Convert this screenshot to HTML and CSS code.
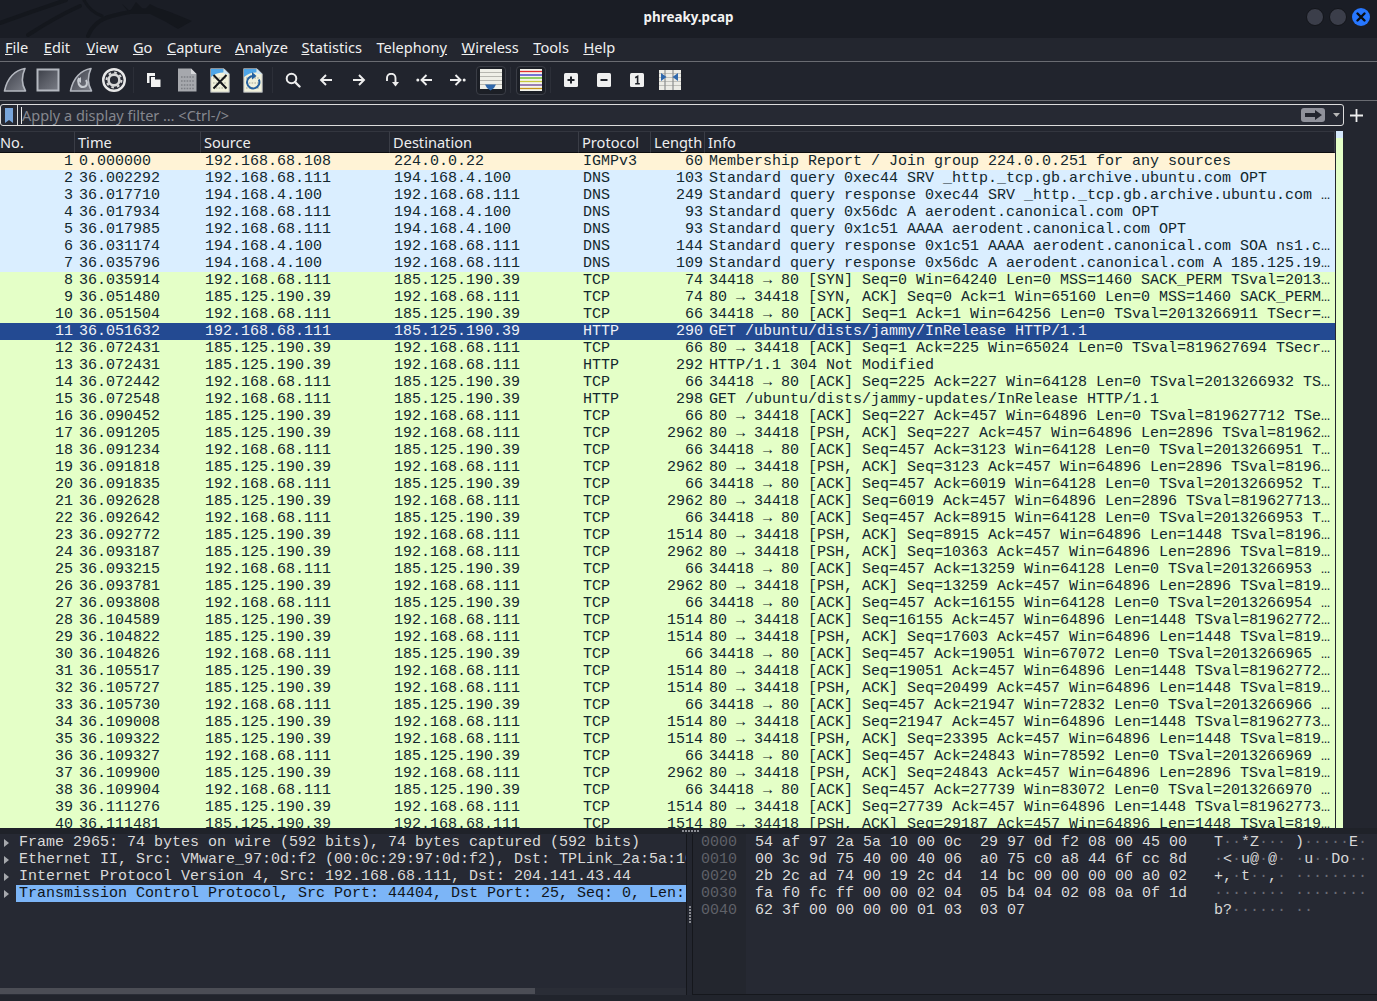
FILE: index.html
```html
<!DOCTYPE html>
<html lang="en">
<head>
<meta charset="utf-8">
<title>phreaky.pcap</title>
<link rel="stylesheet" href="styles.css">
</head>
<body>
<div class="app">
<header class="titlebar">
  <svg class="dragon" width="240" height="38" viewBox="0 0 240 38">
    <g fill="none" stroke="#14171d" stroke-linecap="round">
      <path d="M0 23 C22 15 42 8 66 0" stroke-width="4"/>
      <path d="M28 35 C45 24 62 14 80 6" stroke-width="4"/>
      <path d="M84 0 C88 8 94 13 102 16" stroke-width="3"/>
      <path d="M88 36 C92 26 100 19 112 16 C130 11 146 9 160 11 C168 13 172 16 178 20" stroke-width="4"/>
    </g>
    <path fill="#14171d" d="M122 4 L130 11 L136 2 L144 10 L150 4 L158 8 L170 12 L192 21 L178 29 L166 22 L150 14 L130 14 Z"/>
  </svg>
  <span class="title">phreaky.pcap</span>
  <div class="winbtns">
    <span class="winbtn"></span>
    <span class="winbtn"></span>
    <svg class="winclose" width="18" height="18" viewBox="0 0 18 18"><circle cx="9" cy="9" r="9" fill="#2777ff"/><path d="M5.5 5.5 L12.5 12.5 M12.5 5.5 L5.5 12.5" stroke="#0b0d12" stroke-width="2.4" stroke-linecap="round"/></svg>
  </div>
</header>
<nav class="menubar">
  <span><u>F</u>ile</span><span><u>E</u>dit</span><span><u>V</u>iew</span><span><u>G</u>o</span><span><u>C</u>apture</span><span><u>A</u>nalyze</span><span><u>S</u>tatistics</span><span>Telephon<u>y</u></span><span><u>W</u>ireless</span><span><u>T</u>ools</span><span><u>H</u>elp</span>
</nav>
<div class="toolbar">
  <span class="btn first"><svg width="24" height="26" viewBox="0 0 24 26"><defs><linearGradient id="fg" x1="0" y1="0" x2="1" y2="1"><stop offset="0" stop-color="#3a3d47"/><stop offset="1" stop-color="#7c7f88"/></linearGradient></defs><path d="M22 1.5 C12 3 4 11 1.5 24 L22.5 24 C18.5 17 18.5 9 22 1.5 Z" fill="url(#fg)" stroke="#b4b8c0" stroke-width="1.6" stroke-linejoin="round"/></svg></span>
  <span class="btn"><svg width="24" height="24" viewBox="0 0 24 24"><defs><linearGradient id="sg" x1="0" y1="0" x2="1" y2="1"><stop offset="0" stop-color="#3d4049"/><stop offset="1" stop-color="#7a7d86"/></linearGradient></defs><rect x="1.5" y="1.5" width="21" height="21" fill="url(#sg)" stroke="#b4b8c0" stroke-width="2"/></svg></span>
  <span class="btn"><svg width="24" height="26" viewBox="0 0 24 26"><path d="M22 1.5 C12 3 4 11 1.5 24 L22.5 24 C18.5 17 18.5 9 22 1.5 Z" fill="url(#fg)" stroke="#b4b8c0" stroke-width="1.6" stroke-linejoin="round"/><path d="M10 11 C8 15 10 20 14 20 C18 20 19 16 17 13" fill="none" stroke="#c8ccd2" stroke-width="2"/><path d="M12 10 L12 16 L8 13 Z" fill="#c8ccd2"/></svg></span>
  <span class="btn"><svg width="26" height="26" viewBox="0 0 26 26"><circle cx="13" cy="13" r="10.8" fill="#2a2d36" stroke="#e8e8e8" stroke-width="2.4"/><circle cx="13" cy="13" r="5.4" fill="none" stroke="#d8d8d8" stroke-width="2.6"/><circle cx="13" cy="13" r="7.4" fill="none" stroke="#d8d8d8" stroke-width="2" stroke-dasharray="2.6 3.2"/></svg></span>
  <span class="sep"></span>
  <span class="btn"><svg width="15" height="16" viewBox="0 0 15 16"><path d="M1 1 H9 V4 H3.5 V11 H1 Z" fill="#f2f2f2"/><path d="M5 5 H9 L9 7.5 H14.5 V15 H5 Z" fill="#f2f2f2"/></svg></span>
  <span class="btn"><svg width="20" height="24" viewBox="0 0 20 24"><path d="M1 0.5 H14 L19.5 6 V23.5 H1 Z" fill="#a6a8ad"/><path d="M14 0.5 V6 H19.5 Z" fill="#d6d7da"/><g stroke="#7d7f85" stroke-width="1.6" stroke-dasharray="1.6 1.2"><path d="M4 9 H17"/><path d="M4 13 H17"/><path d="M4 17 H17"/><path d="M4 20.5 H17"/></g></svg></span>
  <span class="btn"><svg width="20" height="25" viewBox="0 0 20 25"><path d="M0.7 0.7 H14 L19.3 6 V24.3 H0.7 Z" fill="#f1f1dc" stroke="#9da1a6"/><path d="M1 1 H13.5 V4.5 C9 4.5 5 5.5 1 9 Z" fill="#4fa6e8"/><path d="M14 1 V6 H19 Z" fill="#cfe6f5"/><g stroke="#bdbfae" stroke-width="1.4" stroke-dasharray="1.6 1.2"><path d="M3 10 H17"/><path d="M3 15 H17"/><path d="M3 20 H17"/></g><path d="M3.5 7 L16.5 20.5 M16.5 7 L3.5 20.5" stroke="#15171c" stroke-width="2"/></svg></span>
  <span class="btn"><svg width="20" height="25" viewBox="0 0 20 25"><path d="M0.7 0.7 H14 L19.3 6 V24.3 H0.7 Z" fill="#f1f1dc" stroke="#9da1a6"/><path d="M1 1 H13.5 V4.5 C9 4.5 5 5.5 1 9 Z" fill="#4fa6e8"/><path d="M14 1 V6 H19 Z" fill="#cfe6f5"/><g stroke="#bdbfae" stroke-width="1.4" stroke-dasharray="1.6 1.2"><path d="M3 10 H17"/><path d="M3 15 H17"/><path d="M3 20 H17"/></g><path d="M10.5 8 A6.2 6.2 0 1 0 15.8 11.5" fill="none" stroke="#24609f" stroke-width="2"/><path d="M9 4 L13.5 8 L9 11.5 Z" fill="#24609f"/></svg></span>
  <span class="sep"></span>
  <span class="btn"><svg width="16" height="16" viewBox="0 0 16 16"><circle cx="6.5" cy="6.5" r="4.8" fill="none" stroke="#eee" stroke-width="2"/><path d="M10 10 L14.5 14.5" stroke="#eee" stroke-width="2.4" stroke-linecap="round"/></svg></span>
  <span class="btn"><svg width="14" height="14" viewBox="0 0 14 14"><path d="M13 7 H2 M7 2 L2 7 L7 12" fill="none" stroke="#eee" stroke-width="1.9"/></svg></span>
  <span class="btn"><svg width="14" height="14" viewBox="0 0 14 14"><path d="M1 7 H12 M7 2 L12 7 L7 12" fill="none" stroke="#eee" stroke-width="1.9"/></svg></span>
  <span class="btn"><svg width="14" height="14" viewBox="0 0 14 14"><path d="M2 8 V5 A4 4 0 0 1 10.5 5 V9" fill="none" stroke="#eee" stroke-width="1.9"/><path d="M7 9 H14 L10.5 13.5 Z" fill="#eee"/></svg></span>
  <span class="btn"><svg width="17" height="14" viewBox="0 0 17 14"><circle cx="1.8" cy="7" r="1.5" fill="#eee"/><path d="M16 7 H6 M10.5 2 L5.5 7 L10.5 12" fill="none" stroke="#eee" stroke-width="1.9"/></svg></span>
  <span class="btn"><svg width="17" height="14" viewBox="0 0 17 14"><circle cx="15.2" cy="7" r="1.5" fill="#eee"/><path d="M1 7 H11 M6.5 2 L11.5 7 L6.5 12" fill="none" stroke="#eee" stroke-width="1.9"/></svg></span>
  <span class="btn"><span class="toggle"><svg width="22" height="22" viewBox="0 0 22 22"><rect width="22" height="20" fill="#efefe8"/><path d="M0 3.5 H22 M0 7.5 H22 M0 11.5 H22 M0 15.5 H22" stroke="#b6b6b0" stroke-width="1"/><path d="M10.5 21.5 L7 19 L5 15.5 H16 L14 19 Z" fill="#2f68ac"/></svg></span></span>
  <span class="sep"></span>
  <span class="btn"><span class="toggle"><svg width="22" height="22" viewBox="0 0 22 22"><rect width="22" height="22" fill="#f4f4ee"/><path d="M0 2.5 H22" stroke="#e03030" stroke-width="1.3"/><path d="M0 6 H22" stroke="#3030c8" stroke-width="1.3"/><path d="M0 9 H22" stroke="#5cb818" stroke-width="1.3"/><path d="M0 12.5 H22" stroke="#c8c83c" stroke-width="1.3"/><path d="M0 16 H22" stroke="#6a4090" stroke-width="1.3"/><path d="M0 19.5 H22" stroke="#c49418" stroke-width="1.3"/></svg></span></span>
  <span class="sep"></span>
  <span class="btn"><svg width="14" height="14" viewBox="0 0 14 14"><rect width="14" height="14" rx="1.5" fill="#f0f0f0"/><path d="M7 3.5 V10.5 M3.5 7 H10.5" stroke="#1f2229" stroke-width="2"/></svg></span>
  <span class="btn"><svg width="14" height="14" viewBox="0 0 14 14"><rect width="14" height="14" rx="1.5" fill="#f0f0f0"/><path d="M3.5 7 H10.5" stroke="#1f2229" stroke-width="2"/></svg></span>
  <span class="btn"><svg width="14" height="14" viewBox="0 0 14 14"><rect width="14" height="14" rx="1.5" fill="#f0f0f0"/><path d="M5.2 4.8 L7.6 3.4 V10.8 M5.2 10.8 H9.8" fill="none" stroke="#1f2229" stroke-width="1.6"/></svg></span>
  <span class="btn"><svg width="22" height="20" viewBox="0 0 22 20"><rect width="22" height="20" fill="#ecece6"/><path d="M0 3.5 H22 M0 7.5 H22 M0 11.5 H22 M0 15.5 H22" stroke="#c0c0ba"/><path d="M6 0 V20 M14 0 V20" stroke="#8d8f90" stroke-width="1.2"/><path d="M2 3 V11 L7.5 7 Z M19 3 V11 L13.5 7 Z" fill="#2f68ac"/></svg></span>
</div>
<div class="filterrow">
  <div class="filterbox">
    <svg class="bookmark" width="8" height="15" viewBox="0 0 8 15"><path d="M0 0 H8 V15 L4 12 L0 15 Z" fill="#78a6dc"/></svg>
    <span class="fdiv"></span>
    <span class="caret"></span>
    <span class="placeholder">Apply a display filter … &lt;Ctrl-/&gt;</span>
    <span class="applybtn"><svg width="17" height="10" viewBox="0 0 17 10"><path d="M0 3 H10 V0 L17 5 L10 10 V7 H0 Z" fill="#22252e"/></svg></span>
    <svg class="dropdown" width="7" height="4" viewBox="0 0 7 4"><path d="M0 0 H7 L3.5 4 Z" fill="#b8b8b8"/></svg>
  </div>
  <svg class="plus" width="13" height="13" viewBox="0 0 13 13"><path d="M6.5 0 V13 M0 6.5 H13" stroke="#eee" stroke-width="1.8"/></svg>
</div>
<main class="packets">
  <div class="tablewrap">
  <table class="ptable">
    <colgroup><col class="c-no"><col class="c-time"><col class="c-addr"><col class="c-addr"><col class="c-proto"><col class="c-len"><col class="c-info"></colgroup>
    <thead><tr><th class="h-no">No.</th><th>Time</th><th>Source</th><th>Destination</th><th>Protocol</th><th>Length</th><th>Info</th></tr></thead>
    <tbody>
<tr class="igmp"><td class="no">1</td><td>0.000000</td><td>192.168.68.108</td><td>224.0.0.22</td><td>IGMPv3</td><td class="len">60</td><td>Membership Report / Join group 224.0.0.251 for any sources</td></tr>
<tr class="dns"><td class="no">2</td><td>36.002292</td><td>192.168.68.111</td><td>194.168.4.100</td><td>DNS</td><td class="len">103</td><td>Standard query 0xec44 SRV _http._tcp.gb.archive.ubuntu.com OPT</td></tr>
<tr class="dns"><td class="no">3</td><td>36.017710</td><td>194.168.4.100</td><td>192.168.68.111</td><td>DNS</td><td class="len">249</td><td>Standard query response 0xec44 SRV _http._tcp.gb.archive.ubuntu.com …</td></tr>
<tr class="dns"><td class="no">4</td><td>36.017934</td><td>192.168.68.111</td><td>194.168.4.100</td><td>DNS</td><td class="len">93</td><td>Standard query 0x56dc A aerodent.canonical.com OPT</td></tr>
<tr class="dns"><td class="no">5</td><td>36.017985</td><td>192.168.68.111</td><td>194.168.4.100</td><td>DNS</td><td class="len">93</td><td>Standard query 0x1c51 AAAA aerodent.canonical.com OPT</td></tr>
<tr class="dns"><td class="no">6</td><td>36.031174</td><td>194.168.4.100</td><td>192.168.68.111</td><td>DNS</td><td class="len">144</td><td>Standard query response 0x1c51 AAAA aerodent.canonical.com SOA ns1.c…</td></tr>
<tr class="dns"><td class="no">7</td><td>36.035796</td><td>194.168.4.100</td><td>192.168.68.111</td><td>DNS</td><td class="len">109</td><td>Standard query response 0x56dc A aerodent.canonical.com A 185.125.19…</td></tr>
<tr class="tcp"><td class="no">8</td><td>36.035914</td><td>192.168.68.111</td><td>185.125.190.39</td><td>TCP</td><td class="len">74</td><td>34418 → 80 [SYN] Seq=0 Win=64240 Len=0 MSS=1460 SACK_PERM TSval=2013…</td></tr>
<tr class="tcp"><td class="no">9</td><td>36.051480</td><td>185.125.190.39</td><td>192.168.68.111</td><td>TCP</td><td class="len">74</td><td>80 → 34418 [SYN, ACK] Seq=0 Ack=1 Win=65160 Len=0 MSS=1460 SACK_PERM…</td></tr>
<tr class="tcp"><td class="no">10</td><td>36.051504</td><td>192.168.68.111</td><td>185.125.190.39</td><td>TCP</td><td class="len">66</td><td>34418 → 80 [ACK] Seq=1 Ack=1 Win=64256 Len=0 TSval=2013266911 TSecr=…</td></tr>
<tr class="sel"><td class="no">11</td><td>36.051632</td><td>192.168.68.111</td><td>185.125.190.39</td><td>HTTP</td><td class="len">290</td><td>GET /ubuntu/dists/jammy/InRelease HTTP/1.1</td></tr>
<tr class="tcp"><td class="no">12</td><td>36.072431</td><td>185.125.190.39</td><td>192.168.68.111</td><td>TCP</td><td class="len">66</td><td>80 → 34418 [ACK] Seq=1 Ack=225 Win=65024 Len=0 TSval=819627694 TSecr…</td></tr>
<tr class="tcp"><td class="no">13</td><td>36.072431</td><td>185.125.190.39</td><td>192.168.68.111</td><td>HTTP</td><td class="len">292</td><td>HTTP/1.1 304 Not Modified</td></tr>
<tr class="tcp"><td class="no">14</td><td>36.072442</td><td>192.168.68.111</td><td>185.125.190.39</td><td>TCP</td><td class="len">66</td><td>34418 → 80 [ACK] Seq=225 Ack=227 Win=64128 Len=0 TSval=2013266932 TS…</td></tr>
<tr class="tcp"><td class="no">15</td><td>36.072548</td><td>192.168.68.111</td><td>185.125.190.39</td><td>HTTP</td><td class="len">298</td><td>GET /ubuntu/dists/jammy-updates/InRelease HTTP/1.1</td></tr>
<tr class="tcp"><td class="no">16</td><td>36.090452</td><td>185.125.190.39</td><td>192.168.68.111</td><td>TCP</td><td class="len">66</td><td>80 → 34418 [ACK] Seq=227 Ack=457 Win=64896 Len=0 TSval=819627712 TSe…</td></tr>
<tr class="tcp"><td class="no">17</td><td>36.091205</td><td>185.125.190.39</td><td>192.168.68.111</td><td>TCP</td><td class="len">2962</td><td>80 → 34418 [PSH, ACK] Seq=227 Ack=457 Win=64896 Len=2896 TSval=81962…</td></tr>
<tr class="tcp"><td class="no">18</td><td>36.091234</td><td>192.168.68.111</td><td>185.125.190.39</td><td>TCP</td><td class="len">66</td><td>34418 → 80 [ACK] Seq=457 Ack=3123 Win=64128 Len=0 TSval=2013266951 T…</td></tr>
<tr class="tcp"><td class="no">19</td><td>36.091818</td><td>185.125.190.39</td><td>192.168.68.111</td><td>TCP</td><td class="len">2962</td><td>80 → 34418 [PSH, ACK] Seq=3123 Ack=457 Win=64896 Len=2896 TSval=8196…</td></tr>
<tr class="tcp"><td class="no">20</td><td>36.091835</td><td>192.168.68.111</td><td>185.125.190.39</td><td>TCP</td><td class="len">66</td><td>34418 → 80 [ACK] Seq=457 Ack=6019 Win=64128 Len=0 TSval=2013266952 T…</td></tr>
<tr class="tcp"><td class="no">21</td><td>36.092628</td><td>185.125.190.39</td><td>192.168.68.111</td><td>TCP</td><td class="len">2962</td><td>80 → 34418 [ACK] Seq=6019 Ack=457 Win=64896 Len=2896 TSval=819627713…</td></tr>
<tr class="tcp"><td class="no">22</td><td>36.092642</td><td>192.168.68.111</td><td>185.125.190.39</td><td>TCP</td><td class="len">66</td><td>34418 → 80 [ACK] Seq=457 Ack=8915 Win=64128 Len=0 TSval=2013266953 T…</td></tr>
<tr class="tcp"><td class="no">23</td><td>36.092772</td><td>185.125.190.39</td><td>192.168.68.111</td><td>TCP</td><td class="len">1514</td><td>80 → 34418 [PSH, ACK] Seq=8915 Ack=457 Win=64896 Len=1448 TSval=8196…</td></tr>
<tr class="tcp"><td class="no">24</td><td>36.093187</td><td>185.125.190.39</td><td>192.168.68.111</td><td>TCP</td><td class="len">2962</td><td>80 → 34418 [PSH, ACK] Seq=10363 Ack=457 Win=64896 Len=2896 TSval=819…</td></tr>
<tr class="tcp"><td class="no">25</td><td>36.093215</td><td>192.168.68.111</td><td>185.125.190.39</td><td>TCP</td><td class="len">66</td><td>34418 → 80 [ACK] Seq=457 Ack=13259 Win=64128 Len=0 TSval=2013266953 …</td></tr>
<tr class="tcp"><td class="no">26</td><td>36.093781</td><td>185.125.190.39</td><td>192.168.68.111</td><td>TCP</td><td class="len">2962</td><td>80 → 34418 [PSH, ACK] Seq=13259 Ack=457 Win=64896 Len=2896 TSval=819…</td></tr>
<tr class="tcp"><td class="no">27</td><td>36.093808</td><td>192.168.68.111</td><td>185.125.190.39</td><td>TCP</td><td class="len">66</td><td>34418 → 80 [ACK] Seq=457 Ack=16155 Win=64128 Len=0 TSval=2013266954 …</td></tr>
<tr class="tcp"><td class="no">28</td><td>36.104589</td><td>185.125.190.39</td><td>192.168.68.111</td><td>TCP</td><td class="len">1514</td><td>80 → 34418 [ACK] Seq=16155 Ack=457 Win=64896 Len=1448 TSval=81962772…</td></tr>
<tr class="tcp"><td class="no">29</td><td>36.104822</td><td>185.125.190.39</td><td>192.168.68.111</td><td>TCP</td><td class="len">1514</td><td>80 → 34418 [PSH, ACK] Seq=17603 Ack=457 Win=64896 Len=1448 TSval=819…</td></tr>
<tr class="tcp"><td class="no">30</td><td>36.104826</td><td>192.168.68.111</td><td>185.125.190.39</td><td>TCP</td><td class="len">66</td><td>34418 → 80 [ACK] Seq=457 Ack=19051 Win=67072 Len=0 TSval=2013266965 …</td></tr>
<tr class="tcp"><td class="no">31</td><td>36.105517</td><td>185.125.190.39</td><td>192.168.68.111</td><td>TCP</td><td class="len">1514</td><td>80 → 34418 [ACK] Seq=19051 Ack=457 Win=64896 Len=1448 TSval=81962772…</td></tr>
<tr class="tcp"><td class="no">32</td><td>36.105727</td><td>185.125.190.39</td><td>192.168.68.111</td><td>TCP</td><td class="len">1514</td><td>80 → 34418 [PSH, ACK] Seq=20499 Ack=457 Win=64896 Len=1448 TSval=819…</td></tr>
<tr class="tcp"><td class="no">33</td><td>36.105730</td><td>192.168.68.111</td><td>185.125.190.39</td><td>TCP</td><td class="len">66</td><td>34418 → 80 [ACK] Seq=457 Ack=21947 Win=72832 Len=0 TSval=2013266966 …</td></tr>
<tr class="tcp"><td class="no">34</td><td>36.109008</td><td>185.125.190.39</td><td>192.168.68.111</td><td>TCP</td><td class="len">1514</td><td>80 → 34418 [ACK] Seq=21947 Ack=457 Win=64896 Len=1448 TSval=81962773…</td></tr>
<tr class="tcp"><td class="no">35</td><td>36.109322</td><td>185.125.190.39</td><td>192.168.68.111</td><td>TCP</td><td class="len">1514</td><td>80 → 34418 [PSH, ACK] Seq=23395 Ack=457 Win=64896 Len=1448 TSval=819…</td></tr>
<tr class="tcp"><td class="no">36</td><td>36.109327</td><td>192.168.68.111</td><td>185.125.190.39</td><td>TCP</td><td class="len">66</td><td>34418 → 80 [ACK] Seq=457 Ack=24843 Win=78592 Len=0 TSval=2013266969 …</td></tr>
<tr class="tcp"><td class="no">37</td><td>36.109900</td><td>185.125.190.39</td><td>192.168.68.111</td><td>TCP</td><td class="len">2962</td><td>80 → 34418 [PSH, ACK] Seq=24843 Ack=457 Win=64896 Len=2896 TSval=819…</td></tr>
<tr class="tcp"><td class="no">38</td><td>36.109904</td><td>192.168.68.111</td><td>185.125.190.39</td><td>TCP</td><td class="len">66</td><td>34418 → 80 [ACK] Seq=457 Ack=27739 Win=83072 Len=0 TSval=2013266970 …</td></tr>
<tr class="tcp"><td class="no">39</td><td>36.111276</td><td>185.125.190.39</td><td>192.168.68.111</td><td>TCP</td><td class="len">1514</td><td>80 → 34418 [ACK] Seq=27739 Ack=457 Win=64896 Len=1448 TSval=81962773…</td></tr>
<tr class="tcp"><td class="no">40</td><td>36.111481</td><td>185.125.190.39</td><td>192.168.68.111</td><td>TCP</td><td class="len">1514</td><td>80 → 34418 [PSH, ACK] Seq=29187 Ack=457 Win=64896 Len=1448 TSval=819…</td></tr>
    </tbody>
  </table>
  </div>
  <div class="minimap"><span class="mm-top"></span></div>
</main>
<div class="splitter"><span class="grip-h"></span></div>
<section class="lower">
  <div class="details">
    <div class="dlines">
      <div class="dline"><span class="tri"></span><span class="dtext">Frame 2965: 74 bytes on wire (592 bits), 74 bytes captured (592 bits)</span></div>
      <div class="dline"><span class="tri"></span><span class="dtext">Ethernet II, Src: VMware_97:0d:f2 (00:0c:29:97:0d:f2), Dst: TPLink_2a:5a:10 (54:af:97:2a:5a:10)</span></div>
      <div class="dline"><span class="tri"></span><span class="dtext">Internet Protocol Version 4, Src: 192.168.68.111, Dst: 204.141.43.44</span></div>
      <div class="dline"><span class="tri"></span><span class="dtext dsel">Transmission Control Protocol, Src Port: 44404, Dst Port: 25, Seq: 0, Len: 0</span></div>
    </div>
    <div class="hscroll"><span class="hthumb"></span></div>
  </div>
  <div class="vsplit"><span class="grip-v"></span></div>
  <div class="hexpane">
    <div class="offsets">0000
0010
0020
0030
0040</div>
    <div class="hex">54 af 97 2a 5a 10 00 0c  29 97 0d f2 08 00 45 00
00 3c 9d 75 40 00 40 06  a0 75 c0 a8 44 6f cc 8d
2b 2c ad 74 00 19 2c d4  14 bc 00 00 00 00 a0 02
fa f0 fc ff 00 00 02 04  05 b4 04 02 08 0a 0f 1d
62 3f 00 00 00 00 01 03  03 07</div>
    <div class="ascii">T<i>··</i>*Z<i>···</i> )<i>·····</i>E<i>·</i>
<i>·</i>&lt;<i>·</i>u@<i>·</i>@<i>·</i> <i>·</i>u<i>··</i>Do<i>··</i>
+,<i>·</i>t<i>··</i>,<i>·</i> <i>········</i>
<i>········</i> <i>········</i>
b?<i>······</i> <i>··</i></div>
  </div>
</section>
<div class="statusstrip"></div>
</div>
</body>
</html>
```
FILE: styles.css
```css
* { box-sizing: border-box; }
html, body { margin: 0; padding: 0; height: 100%; overflow: hidden; background: #23262f; }
.app { width: 1377px; height: 1001px; display: flex; flex-direction: column; overflow: hidden; font-family: "Noto Sans", sans-serif; }

.titlebar { position: relative; height: 38px; flex: none; background: #1a1d25; display: flex; align-items: center; justify-content: center; }
.dragon { position: absolute; left: 0; top: 0; }
.title { color: #f2f2f2; font: bold 13.4px/18px "Noto Sans", sans-serif; padding-bottom: 4px; }
.winbtns { position: absolute; right: 7px; top: 8px; display: flex; gap: 5px; align-items: center; }
.winbtn { width: 18px; height: 18px; border-radius: 50%; background: #3b3e4a; border: 1px solid #13151a; }

.menubar { height: 24px; flex: none; background: #23262f; border-bottom: 1px solid #6a6c72; display: flex; gap: 14.5px; padding: 0 0 0 5px; align-items: flex-start; color: #f0f0f0; font-size: 14.6px; line-height: 19px; }
.menubar span:nth-child(2) { margin-left: 1px; }
.menubar span:nth-child(3) { margin-left: 2px; }
.menubar span:nth-child(6) { margin-left: -1px; }
.menubar span:nth-child(7) { margin-left: -1px; }

.toolbar { height: 39px; flex: none; background: #21242d; border-bottom: 1px solid #6a6c72; display: flex; align-items: center; padding-bottom: 2px; }
.btn { width: 33px; height: 30px; flex: none; display: flex; align-items: center; justify-content: center; }
.btn.first { margin-left: -2px; }
.sep { width: 7px; flex: none; display: flex; justify-content: center; height: 26px; }
.sep::after { content: ""; width: 1px; height: 26px; background: #2c2f38; }
.toggle { width: 30px; height: 29px; flex: none; display: flex; align-items: center; justify-content: center; background: #1c1f26; border: 1px solid #3a3d46; border-radius: 4px; }

.filterrow { height: 30px; flex: none; background: #23262f; display: flex; align-items: flex-start; padding-top: 3px; }
.filterbox { width: 1344px; height: 22px; flex: none; border: 1px solid #dcdcdc; border-radius: 3px; background: #262933; display: flex; align-items: center; padding-left: 4px; }
.bookmark { flex: none; }
.fdiv { width: 1px; height: 20px; background: #dcdcdc; margin-left: 4px; flex: none; }
.caret { width: 1px; height: 17px; background: #e8e8e8; margin-left: 3px; flex: none; }
.placeholder { color: #85878e; font-size: 14.5px; line-height: 20px; flex: 1; white-space: nowrap; }
.applybtn { width: 24px; height: 14px; background: #90929b; border-radius: 3px; display: flex; align-items: center; justify-content: center; flex: none; margin-right: 8px; }
.dropdown { flex: none; margin-right: 3px; }
.plus { margin: 5px 0 0 6px; flex: none; }

.packets { height: 697px; flex: none; display: flex; background: #23262f; }
.tablewrap { width: 1336px; flex: none; height: 697px; overflow: hidden; border-right: 1px solid #23262f; }
.ptable { width: 1335px; table-layout: fixed; border-collapse: separate; border-spacing: 0; }
.c-no { width: 75px; } .c-time { width: 126px; } .c-addr { width: 189px; } .c-proto { width: 72px; } .c-len { width: 54px; } .c-info { width: 630px; }
.ptable th { height: 22px; padding: 0 0 0 3px; background: #22252e; color: #eeeeee; font: normal 14.6px/20px "Noto Sans", sans-serif; text-align: left; border-right: 1px solid #3a3d46; border-bottom: 1px solid #0c0d10; border-top: 1px solid #33363f; white-space: nowrap; overflow: hidden; }
.ptable th.h-no { padding-left: 0; }
.ptable td { height: 17px; padding: 0 0 0 4px; font: 15px/17px "Liberation Mono", monospace; white-space: nowrap; overflow: hidden; color: #12272e; }
.ptable td.no, .ptable td.len { text-align: right; padding: 0 2px 0 0; }
.igmp td { background: #fff3d6; }
.dns td { background: #daeeff; }
.tcp td { background: #e4ffc7; }
.sel td { background: #234a92; color: #f0f2f6; }

.minimap { width: 7px; height: 697px; flex: none; background: #e4ffc7; }
.mm-top { display: block; height: 7px; background: #d5e8fb; }

.splitter { height: 6px; flex: none; background: #1f2229; padding-left: 682px; display: flex; align-items: center; }
.grip-h { display: block; width: 17px; height: 2px; background: repeating-linear-gradient(90deg, #8a8c92 0 2px, transparent 2px 3px); }

.lower { height: 161px; flex: none; display: flex; background: #262933; }
.details { width: 687px; flex: none; display: flex; flex-direction: column; border-right: 1px solid #15171c; }
.dlines { flex: 1; overflow: hidden; }
.dline { height: 17px; display: flex; align-items: center; font: 15px/17px "Liberation Mono", monospace; color: #dadada; white-space: nowrap; overflow: hidden; }
.tri { width: 0; height: 0; margin-left: 4px; margin-right: 7px; border-left: 5px solid #a6a8ad; border-top: 4px solid transparent; border-bottom: 4px solid transparent; flex: none; }
.dtext { flex: 1; min-width: 0; overflow: hidden; padding-left: 3px; }
.dsel { background: #7cb5f7; color: #10141a; }
.hscroll { height: 7px; flex: none; background: #2a2d36; }
.hthumb { display: block; width: 535px; height: 6px; background: #4b4d55; }

.vsplit { width: 5px; flex: none; background: #23262f; display: flex; align-items: center; justify-content: center; }
.grip-v { display: block; width: 2px; height: 17px; background: repeating-linear-gradient(180deg, #8a8c92 0 2px, transparent 2px 3px); }

.hexpane { flex: 1; min-width: 0; display: flex; font: 15px/17px "Liberation Mono", monospace; white-space: pre; border-left: 1px solid #15171c; border-bottom: 1px solid #15171c; }
.offsets { width: 53px; flex: none; padding-left: 8px; color: #5f6168; background: #23262e; }
.hex { width: 468px; flex: none; padding-left: 9px; color: #dcdcdc; }
.ascii { flex: 1; color: #d8d8d8; }
.ascii i { font-style: normal; color: #6a6c73; }

.statusstrip { height: 6px; flex: none; background: #21242c; }
```
